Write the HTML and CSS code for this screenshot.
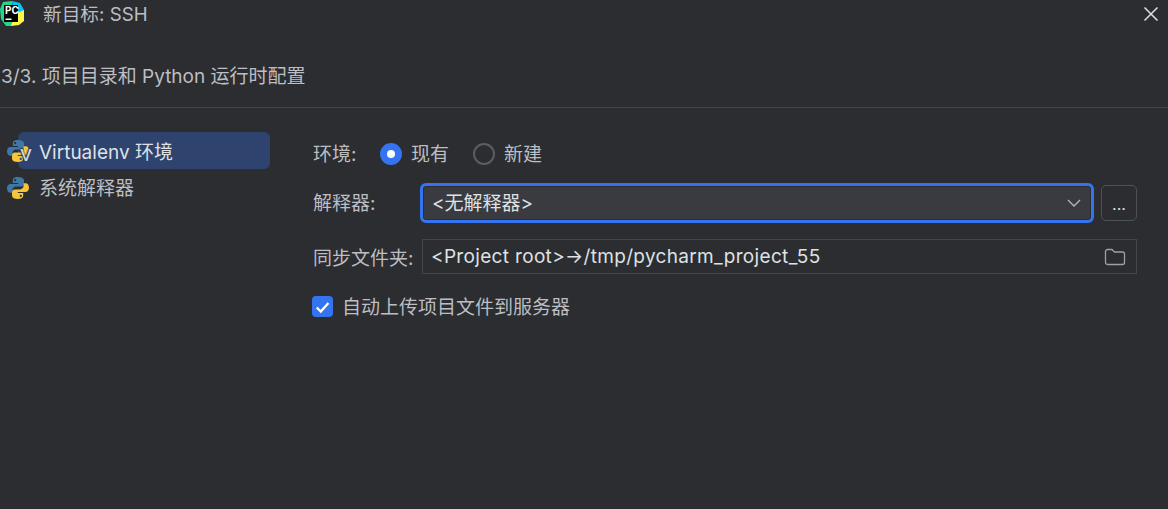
FILE: index.html
```html
<!DOCTYPE html>
<html lang="zh-CN">
<head>
    <meta charset="UTF-8">
    <meta name="viewport" content="width=device-width, initial-scale=1.0">
    <title>新目标: SSH</title>
    <link rel="stylesheet" href="styles.css">
</head>
<body>
    <svg class="defs" width="0" height="0">
        <symbol id="python" viewBox="0 0 24 24">
            <path fill="#3d78a8" d="M11.800 1C7.600 1 6.800 2.800 6.800 4.400V7h5.400v1H4.600C2.400 8 1 9.800 1 12.200c0 2.600 1.300 4.600 3.400 4.600h2v-2.600c0-2 1.700-3.600 3.700-3.600h5c1.600 0 2.900-1.300 2.900-2.900V4.300C18 2.300 15.800 1 11.800 1zM9.200 3a1.100 1.100 0 1 1 0 2.200 1.100 1.100 0 0 1 0-2.200z"/>
            <path fill="#f5c63c" d="M12.200 23c4.200 0 5-1.800 5-3.400V17h-5.400v-1h7.600c2.200 0 3.600-1.800 3.600-4.200 0-2.600-1.300-4.600-3.400-4.600h-2v2.600c0 2-1.700 3.600-3.700 3.600h-5c-1.600 0-2.900 1.300-2.900 2.900v3.400c0 2 2.200 3.300 6.200 3.300zm2.600-2a1.100 1.100 0 1 1 0-2.200 1.100 1.100 0 0 1 0 2.200z"/>
        </symbol>
    </svg>

    <header class="title-bar">
        <svg class="app-logo" viewBox="0 0 24 26" width="24" height="26">
            <polygon fill="#21d789" points="3,1 12,0 13,12 12,25 6,25 1,18 0,8"/>
            <polygon fill="#07c3f2" points="12,0 20,2 24,9 20,14 13,8"/>
            <polygon fill="#fcf84a" points="24,9 24,20 19,24 11,25 15,13"/>
            <rect x="4" y="4" width="14" height="17" fill="#000"/>
            <rect x="5.500" y="17.500" width="6" height="1.500" fill="#fff"/>
            <text x="5" y="13" class="logo-text">PC</text>
        </svg>
        <span class="title-text">新目标: SSH</span>
        <svg class="close-icon" viewBox="0 0 16 16" width="16" height="16">
            <path d="M1.500 1.500l13 13M14.500 1.500l-13 13" stroke="#dfe1e5" stroke-width="1.500" fill="none"/>
        </svg>
    </header>

    <h1 class="step-title">3/3. 项目目录和 Python 运行时配置</h1>

    <main class="content">
        <ul class="sidebar">
            <li class="sidebar-item selected">
                <span class="py-icon">
                    <svg width="24" height="24"><use href="#python"/></svg>
                    <span class="venv-mark">v</span>
                </span>
                <span>Virtualenv 环境</span>
            </li>
            <li class="sidebar-item">
                <span class="py-icon">
                    <svg width="24" height="24"><use href="#python"/></svg>
                </span>
                <span>系统解释器</span>
            </li>
        </ul>

        <form class="form">
            <div class="row env-row">
                <span class="env-label">环境:</span>
                <span class="radio checked"></span>
                <span class="radio-text">现有</span>
                <span class="radio"></span>
                <span class="radio-text">新建</span>
            </div>
            <div class="row interpreter-row">
                <span class="field-label">解释器:</span>
                <div class="combo">
                    <span class="combo-value">&lt;无解释器&gt;</span>
                    <svg viewBox="0 0 16 16" width="16" height="16">
                        <path d="M2 5l6 6 6-6" stroke="#b4b8bf" stroke-width="1.300" fill="none"/>
                    </svg>
                </div>
                <div class="more-btn">...</div>
            </div>
            <div class="row sync-row">
                <span class="field-label">同步文件夹:</span>
                <div class="path-field">
                    <span>&lt;Project root&gt;→/tmp/pycharm_project_55</span>
                    <svg viewBox="0 0 22 20" width="22" height="20">
                        <path d="M1.500 4.500a2 2 0 0 1 2-2h4.500l2.500 2.500h8a2 2 0 0 1 2 2v8.500a2 2 0 0 1-2 2h-15a2 2 0 0 1-2-2z" stroke="#9da0a8" stroke-width="1.300" fill="none"/>
                    </svg>
                </div>
            </div>
            <div class="row upload-row">
                <span class="checkbox">
                    <svg viewBox="0 0 22 22" width="22" height="22">
                        <path d="M5 11.500l4.200 4.200 8-9" stroke="#fff" stroke-width="2.400" fill="none"/>
                    </svg>
                </span>
                <span class="upload-text">自动上传项目文件到服务器</span>
            </div>
        </form>
    </main>
</body>
</html>
```

FILE: styles.css
```css
body {
    margin: 0;
    height: 509px;
    overflow: hidden;
    background-color: #2b2d30;
    color: #dfe1e5;
    font-family: Inter, "Noto Sans CJK SC", sans-serif;
    font-size: 19px;
}
.defs {
    display: block;
}
.title-bar {
    display: flex;
    align-items: center;
    height: 28px;
    color: #bcbec4;
}
.app-logo {
    flex: none;
}
.logo-text {
    fill: #fff;
    font-size: 10px;
    font-weight: 700;
}
.title-text {
    margin-left: 19px;
    padding-top: 2px;
    font-size: 18.7px;
    line-height: 28px;
}
.close-icon {
    margin-left: auto;
    margin-right: 9px;
}
.step-title {
    margin: 35px 0 0;
    padding-left: 1px;
    height: 44px;
    font-size: 19px;
    font-weight: 400;
    line-height: 28px;
    color: #bcbec4;
    border-bottom: 1px solid #43454a;
}
.content {
    display: flex;
    padding-top: 24px;
}
.sidebar {
    list-style: none;
    margin: 0;
    padding: 0 0 0 18px;
    width: 252px;
    flex: none;
}
.sidebar-item {
    display: flex;
    align-items: center;
    position: relative;
    height: 37px;
    padding-left: 21px;
    padding-bottom: 2px;
    box-sizing: border-box;
    border-radius: 6px;
    color: #bcbec4;
    white-space: nowrap;
}
.sidebar-item.selected {
    padding-bottom: 0;
    background-color: #2e436e;
    color: #dfe1e5;
}
.py-icon {
    position: absolute;
    left: -12px;
    top: 7px;
    width: 24px;
    height: 24px;
}
.venv-mark {
    position: absolute;
    right: -2px;
    bottom: -1px;
    font-size: 22px;
    line-height: 22px;
    color: #cfd6e6;
    text-shadow: -1px 0 1px #2b2d30, 0 -1px 1px #2b2d30;
}
.form {
    flex: 1;
    padding-left: 43px;
    padding-right: 31px;
}
.row {
    display: flex;
    align-items: center;
    color: #bcbec4;
}
.env-row {
    height: 44px;
}
.env-row span:not(.radio) {
    padding-bottom: 4px;
}
.env-label {
    width: 67px;
}
.radio {
    width: 22px;
    height: 22px;
    box-sizing: border-box;
    border: 2px solid #5a5d63;
    border-radius: 50%;
}
.radio.checked {
    border: 7.500px solid #3574f0;
    background-color: #fff;
}
.radio-text {
    margin-left: 9px;
    margin-right: 24px;
}
.interpreter-row {
    height: 40px;
    margin-top: 7px;
}
.field-label {
    width: 107px;
    flex: none;
    white-space: nowrap;
}
.interpreter-row .field-label {
    padding-bottom: 4px;
}
.combo {
    flex: 1;
    display: flex;
    align-items: center;
    justify-content: space-between;
    height: 40px;
    box-sizing: border-box;
    padding: 0 9px;
    border: 3px solid #3574f0;
    border-radius: 6px;
    background-color: #393b40;
    box-shadow: inset 0 0 0 1px #2b2d30;
    color: #dfe1e5;
}
.combo-value {
    padding-bottom: 4px;
}
.more-btn {
    width: 36px;
    height: 36px;
    margin-left: 7px;
    box-sizing: border-box;
    border: 1px solid #4e5157;
    border-radius: 5px;
    text-align: center;
    line-height: 36px;
    font-size: 16px;
    color: #dfe1e5;
}
.sync-row {
    height: 35px;
    margin-top: 16px;
}
.path-field {
    flex: 1;
    display: flex;
    align-items: center;
    justify-content: space-between;
    height: 35px;
    margin-left: 2px;
    box-sizing: border-box;
    padding: 0 10px 0 8px;
    border: 1px solid #43454a;
    color: #dfe1e5;
    letter-spacing: 0.33px;
}
.upload-row {
    margin-top: 15px;
    height: 34px;
}
.checkbox {
    width: 21px;
    height: 21px;
    margin-left: -1px;
    border-radius: 4px;
    background-color: #3574f0;
    display: flex;
}
.upload-text {
    margin-left: 9px;
    padding-bottom: 2px;
}
```
